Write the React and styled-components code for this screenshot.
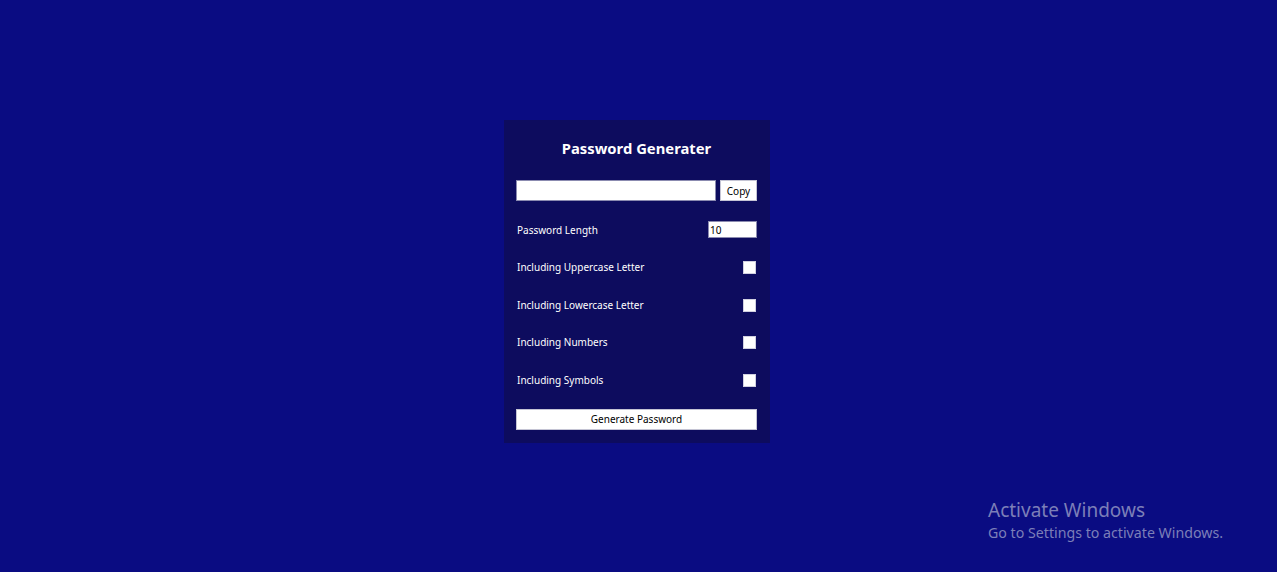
import styled, { createGlobalStyle } from "styled-components";
import { useState } from "react";

const GlobalStyle = createGlobalStyle`
  html, body {
    margin: 0;
    padding: 0;
    height: 100%;
  }
  body {
    background: #0a0c82;
    font-family: "Noto Sans", "Open Sans", sans-serif;
  }
`;

const Page = styled.div`
  position: relative;
  width: 100%;
  height: 572px;
  display: flex;
  justify-content: center;
  align-items: flex-start;
  padding-top: 120px;
  padding-right: 3px;
  box-sizing: border-box;
`;

const Card = styled.div`
  width: 266px;
  box-sizing: border-box;
  padding: 18px 13px 13px 12px;
  background: #0d0c5e;
  color: #ffffff;
`;

const Title = styled.h1`
  margin: 0 0 22px;
  font-size: 14.8px;
  line-height: 20px;
  font-weight: 700;
  text-align: center;
`;

const InputRow = styled.div`
  display: flex;
  gap: 4px;
  height: 21px;
  margin-bottom: 10px;
`;

const TextField = styled.input`
  width: ${(p) => p.$width || "200px"};
  height: ${(p) => p.$height || "21px"};
  box-sizing: border-box;
  border: 1px solid #8b8bb0;
  background: #ffffff;
  padding: 0 1px;
  font-family: inherit;
  font-size: 10px;
  color: #000;
  outline: none;
`;

const SmallButton = styled.button`
  width: ${(p) => p.$width || "37px"};
  height: 21px;
  box-sizing: border-box;
  border: 1px solid #c4c4d4;
  background: #ffffff;
  color: #000;
  font-family: inherit;
  font-size: 10px;
  padding: 0;
  cursor: pointer;
`;

const OptionRow = styled.label`
  display: flex;
  align-items: center;
  justify-content: space-between;
  height: 37.5px;
  font-size: 10px;
  padding-left: 1px;
`;

const Check = styled.input.attrs({ type: "checkbox" })`
  appearance: none;
  width: 13px;
  height: 13px;
  margin: 1px 1px 0 0;
  background: #ffffff;
  border: 1px solid #d0d0e0;
  box-sizing: border-box;
`;

const GenerateButton = styled(SmallButton)`
  width: 241px;
  margin-top: 10px;
  display: block;
`;

const Watermark = styled.div`
  position: absolute;
  left: 988px;
  top: 498px;
  color: #7c7fb8;
  font-family: "Noto Sans", "Open Sans", sans-serif;
  pointer-events: none;
`;

const WatermarkTitle = styled.div`
  font-size: 19px;
  line-height: 24px;
`;

const WatermarkSub = styled.div`
  font-size: 14.2px;
  line-height: 21px;
`;

const options = [
  "Including Uppercase Letter",
  "Including Lowercase Letter",
  "Including Numbers",
  "Including Symbols",
];

const App = () => {
  const [length, setLength] = useState(10);

  return (
    <>
      <GlobalStyle />
      <Page>
        <Card>
          <Title>Password Generater</Title>
          <InputRow>
            <TextField type="text" readOnly />
            <SmallButton>Copy</SmallButton>
          </InputRow>
          <OptionRow>
            Password Length
            <TextField
              type="text"
              $width="49px"
              $height="17px"
              value={length}
              onChange={(e) => setLength(e.target.value)}
            />
          </OptionRow>
          {options.map((o) => (
            <OptionRow key={o}>
              {o}
              <Check />
            </OptionRow>
          ))}
          <GenerateButton>Generate Password</GenerateButton>
        </Card>
        <Watermark>
          <WatermarkTitle>Activate Windows</WatermarkTitle>
          <WatermarkSub>Go to Settings to activate Windows.</WatermarkSub>
        </Watermark>
      </Page>
    </>
  );
};

export default App;
